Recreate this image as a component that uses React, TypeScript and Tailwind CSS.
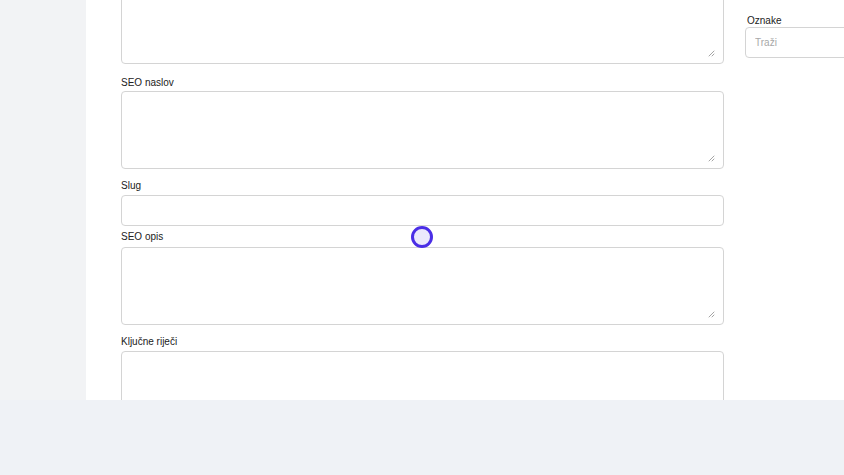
import React from 'react'

const fieldBase =
  'block w-full rounded-[4px] border border-[#d4d4d4] bg-white text-[10px] text-gray-800 outline-none'

function Label({ children, className = '' }: { children: React.ReactNode; className?: string }) {
  return <label className={`block text-[10px] leading-[12px] text-[#222] ${className}`}>{children}</label>
}

// textarea s malim ručnim "resize" markerom kao u Safariju
function Area({ height }: { height: string }) {
  return (
    <div className="relative">
      <textarea className={`${fieldBase} resize-none ${height}`} />
      <svg className="pointer-events-none absolute bottom-[7px] right-[9px]" width="7" height="7" viewBox="0 0 7 7">
        <path d="M1 6 L6 1 M4 6 L6 4" stroke="#9a9a9a" strokeWidth="0.9" strokeLinecap="round" />
      </svg>
    </div>
  )
}

export default function App() {
  return (
    <div className="relative h-[475px] w-[844px] overflow-hidden bg-[#eff2f6] font-['Liberation_Sans',Arial,sans-serif]">
      <div className="flex h-[400px]">
        {/* lijevi sidebar */}
        <div className="w-[86px] shrink-0 bg-[#f2f3f5]" />

        {/* glavni sadržaj */}
        <div className="flex flex-1 overflow-hidden bg-white pl-[35px]">
          {/* lijevi stupac s poljima */}
          <div className="-mt-[20px] w-[603px] shrink-0">
            <Area height="h-[84px]" />

            <Label className="mt-[13px] mb-[2px]">SEO naslov</Label>
            <Area height="h-[78px]" />

            <Label className="mt-[11px] mb-[3px]">Slug</Label>
            <input type="text" className={`${fieldBase} h-[31px] px-2`} />

            <Label className="mt-[5px] mb-[4px]">SEO opis</Label>
            <Area height="h-[78px]" />

            <Label className="mt-[11px] mb-[3px]">Ključne riječi</Label>
            <Area height="h-[78px]" />
          </div>

          {/* desni stupac */}
          <div className="ml-[21px] w-[200px] shrink-0 pt-[15px]">
            <Label className="mb-0 pl-[2px]">Oznake</Label>
            <input
              type="text"
              placeholder="Traži"
              className={`${fieldBase} h-[31px] px-[9px] placeholder:text-[#a8a8a8]`}
            />
          </div>
        </div>
      </div>

      {/* kursor */}
      <div className="absolute left-[411px] top-[226px] h-[22px] w-[22px] rounded-full border-[3px] border-[#4a2ee6] bg-[#ebe9fc]" />
    </div>
  )
}
